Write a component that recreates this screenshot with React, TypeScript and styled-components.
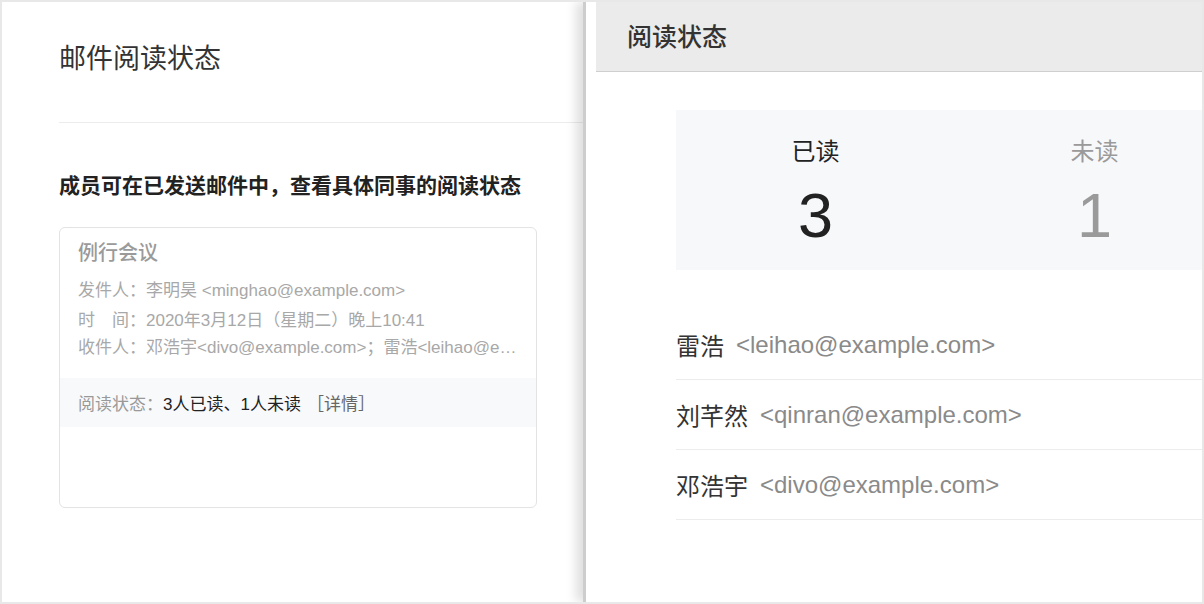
import React from 'react';
import styled, { createGlobalStyle } from 'styled-components';

const GlobalStyle = createGlobalStyle`
  html, body {
    margin: 0;
    padding: 0;
    background: #ffffff;
  }
  * {
    box-sizing: border-box;
  }
`;

const FONT = `"Liberation Sans", "Noto Sans CJK SC", sans-serif`;

const Frame = styled.div`
  display: flex;
  width: 1204px;
  height: 604px;
  border: 2px solid #e8e8e8;
  overflow: hidden;
  font-family: ${FONT};
  background: #ffffff;
`;

/* left: the settings page */

const LeftPanel = styled.section`
  flex: 0 0 581px;
  padding-left: 57px;
  display: flex;
  flex-direction: column;
`;

const PageHeader = styled.header`
  height: 121px;
  padding-top: 42px;
  border-bottom: 1px solid #ececec;
`;

const PageTitle = styled.h1`
  margin: 0;
  font-size: 27px;
  line-height: 30px;
  font-weight: 400;
  color: #333333;
`;

const Intro = styled.p`
  margin: 48px 0 0;
  font-size: 21px;
  line-height: 30px;
  font-weight: 700;
  color: #222222;
`;

const MailCard = styled.div`
  margin-top: 26px;
  width: 478px;
  height: 281px;
  border: 1px solid #e3e3e3;
  border-radius: 6px;
  display: flex;
  flex-direction: column;
  overflow: hidden;
`;

const MailBody = styled.div`
  padding: 12px 20px 0 18px;
  display: flex;
  flex-direction: column;
`;

const MailSubject = styled.div`
  font-size: 20px;
  line-height: 26px;
  font-weight: 500;
  color: #9a9a9a;
`;

const MailRow = styled.div<{ $gap: number }>`
  margin-top: ${({ $gap }) => $gap}px;
  font-size: 17px;
  line-height: 26px;
  color: #a8a8a8;
  white-space: nowrap;
`;

const StatusBand = styled.div`
  margin-top: 17px;
  height: 49px;
  padding-left: 18px;
  display: flex;
  align-items: center;
  background: #f8f9fb;
  font-size: 17px;
  color: #999999;
`;

const StatusValue = styled.span`
  color: #222222;
`;

const StatusLink = styled.span`
  margin-left: 6px;
  color: #666666;
`;

/* right: the read status sheet */

const RightPanel = styled.section`
  position: relative;
  z-index: 1;
  flex: 1 1 auto;
  min-width: 0;
  padding-left: 10px;
  border-left: 3px solid #cdcdcd;
  box-shadow: -7px 0 10px rgba(0, 0, 0, 0.13);
  background: #ffffff;
  overflow: hidden;
  display: flex;
  flex-direction: column;
`;

const SheetHeader = styled.header`
  height: 70px;
  padding-left: 31px;
  display: flex;
  align-items: center;
  background: #ebebeb;
  border-bottom: 1px solid #cfcfcf;
`;

const SheetTitle = styled.h2`
  margin: 0;
  font-size: 25px;
  line-height: 30px;
  font-weight: 500;
  color: #333333;
`;

const SheetBody = styled.div`
  padding: 38px 0 0 80px;
`;

const Stats = styled.div`
  width: 558px;
  height: 160px;
  display: grid;
  grid-template-columns: 279px 279px;
  background: #f7f8fa;
`;

const StatCell = styled.div<{ $muted?: boolean }>`
  padding-top: 30px;
  display: flex;
  flex-direction: column;
  align-items: center;
  color: ${({ $muted }) => ($muted ? '#9a9a9a' : '#222222')};
`;

const StatLabel = styled.div`
  font-size: 24px;
  line-height: 24px;
`;

const StatNumber = styled.div`
  margin-top: 20px;
  font-size: 63px;
  line-height: 63px;
`;

const Readers = styled.ul`
  margin: 40px 0 0;
  padding: 0;
  list-style: none;
`;

const Reader = styled.li`
  height: 70px;
  display: flex;
  align-items: center;
  border-bottom: 1px solid #ececec;
`;

const ReaderName = styled.span`
  font-size: 24px;
  color: #333333;
`;

const ReaderMail = styled.span`
  margin-left: 12px;
  font-size: 24px;
  color: #8a8a8a;
`;

const readers = [
  { name: '雷浩', mail: '<leihao@example.com>' },
  { name: '刘芊然', mail: '<qinran@example.com>' },
  { name: '邓浩宇', mail: '<divo@example.com>' },
];

export default function App(): JSX.Element {
  return (
    <>
      <GlobalStyle />
      <Frame>
        <LeftPanel>
          <PageHeader>
            <PageTitle>邮件阅读状态</PageTitle>
          </PageHeader>
          <Intro>成员可在已发送邮件中，查看具体同事的阅读状态</Intro>
          <MailCard>
            <MailBody>
              <MailSubject>例行会议</MailSubject>
              <MailRow $gap={12}>发件人：李明昊 &lt;minghao@example.com&gt;</MailRow>
              <MailRow $gap={4}>时　间：2020年3月12日（星期二）晚上10:41</MailRow>
              <MailRow $gap={1}>收件人：邓浩宇&lt;divo@example.com&gt;；雷浩&lt;leihao@e…</MailRow>
            </MailBody>
            <StatusBand>
              阅读状态：<StatusValue>3人已读、1人未读</StatusValue>
              <StatusLink>［详情］</StatusLink>
            </StatusBand>
          </MailCard>
        </LeftPanel>

        <RightPanel>
          <SheetHeader>
            <SheetTitle>阅读状态</SheetTitle>
          </SheetHeader>
          <SheetBody>
            <Stats>
              <StatCell>
                <StatLabel>已读</StatLabel>
                <StatNumber>3</StatNumber>
              </StatCell>
              <StatCell $muted>
                <StatLabel>未读</StatLabel>
                <StatNumber>1</StatNumber>
              </StatCell>
            </Stats>
            <Readers>
              {readers.map((r) => (
                <Reader key={r.mail}>
                  <ReaderName>{r.name}</ReaderName>
                  <ReaderMail>{r.mail}</ReaderMail>
                </Reader>
              ))}
            </Readers>
          </SheetBody>
        </RightPanel>
      </Frame>
    </>
  );
}
